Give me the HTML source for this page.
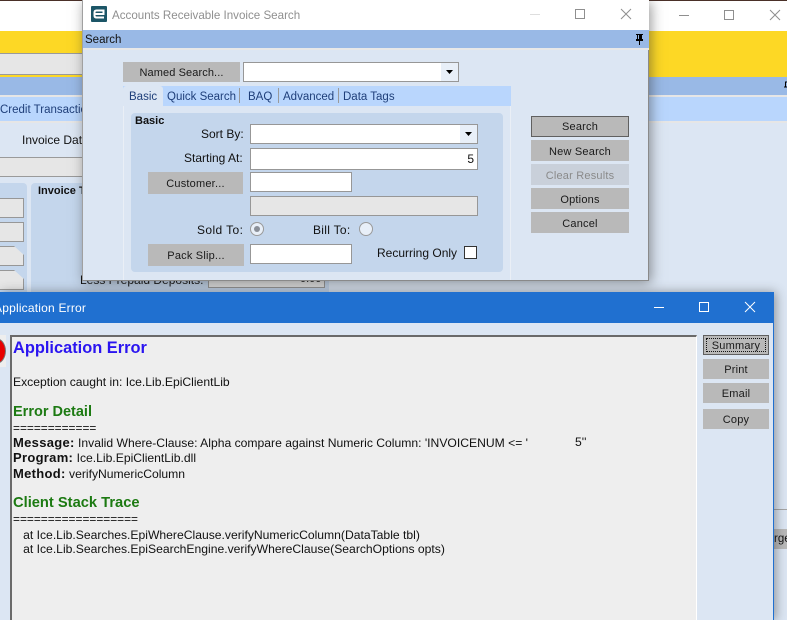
<!DOCTYPE html>
<html>
<head>
<meta charset="utf-8">
<style>
html,body{margin:0;padding:0;width:787px;height:620px;overflow:hidden;background:#dce6f3;}
body{position:relative;font-family:"Liberation Sans",sans-serif;font-size:12px;color:#111;}
.a{position:absolute;box-sizing:border-box;white-space:pre;}
.btn{position:absolute;box-sizing:border-box;background:#b9b9b9;text-align:center;font-size:11px;letter-spacing:.2px;color:#1a1a1a;padding-top:1px;}
.r{padding-top:2px;}
.in{position:absolute;box-sizing:border-box;background:#fff;border:1px solid #979797;}
.lab{position:absolute;font-size:12px;white-space:pre;color:#111;}
.tab{position:absolute;top:87px;height:20px;line-height:20px;font-size:11.5px;color:#1f3f7a;white-space:pre;}
.sep{position:absolute;top:88px;width:1px;height:15px;background:#9a9a9a;}
.err{position:absolute;left:13px;white-space:pre;font-size:12.15px;color:#111;}
.err b{font-size:13px;letter-spacing:.3px;}
.h2{font-weight:bold;color:#1c7a12;}
</style>
</head>
<body>
<!-- background app -->
<div class="a" style="left:0;top:0;width:787px;height:31px;background:#fff;"></div>
<div class="a" style="left:0;top:0;width:787px;height:1px;background:#4a3028;"></div>
<div class="a" style="left:0;top:31px;width:787px;height:46px;background:#fdd825;"></div>
<div class="a" style="left:0;top:53px;width:90px;height:22px;background:#e6e6e6;border-top:1px solid #9a9a9a;border-bottom:1px solid #9a9a9a;"></div>
<div class="a" style="left:0;top:77px;width:787px;height:18px;background:#99b9e6;"></div>
<div class="a" style="left:0;top:95px;width:787px;height:2px;background:#e6e6e6;"></div>
<div class="a" style="left:0;top:97px;width:787px;height:24px;background:#b9d6fd;"></div>
<div class="a" style="left:0;top:121px;width:787px;height:2px;background:#e6e6e6;"></div>
<div class="a" style="left:0;top:104px;font-size:11.5px;color:#1f3f7a;">Credit Transactions</div>
<div class="a" style="left:22px;top:133px;font-size:12px;">Invoice Date:</div>
<div class="a" style="left:0;top:157px;width:90px;height:20px;background:#e6e6e6;border-top:1px solid #9a9a9a;border-bottom:1px solid #9a9a9a;"></div>
<div class="a" style="left:0;top:183px;width:27px;height:110px;background:#c4d6ec;border-radius:0 4px 0 0;"></div>
<div class="a" style="left:31px;top:183px;width:298px;height:110px;background:#c4d6ec;border-radius:4px 0 0 0;"></div>
<div class="a" style="left:38px;top:185px;font-size:11px;font-weight:bold;">Invoice Totals</div>
<div class="a" style="left:0;top:198px;width:24px;height:20px;background:#e6e6e6;border:1px solid #979797;border-left:0;"></div>
<div class="a" style="left:0;top:222px;width:24px;height:20px;background:#e6e6e6;border:1px solid #979797;border-left:0;"></div>
<div class="a" style="left:0;top:246px;width:24px;height:20px;background:#e6e6e6;border:1px solid #979797;border-left:0;clip-path:polygon(0 0,14px 0,100% 9px,100% 100%,0 100%);"></div>
<div class="a" style="left:0;top:270px;width:24px;height:20px;background:#e6e6e6;border:1px solid #979797;border-left:0;clip-path:polygon(0 0,14px 0,100% 9px,100% 100%,0 100%);"></div>
<div class="a" style="left:80px;top:273px;font-size:12px;">Less Prepaid Deposits:</div>
<div class="a" style="left:208px;top:275px;width:117px;height:13px;background:#e6e6e6;border:1px solid #979797;"></div>
<div class="a" style="left:300px;top:273px;font-size:11px;">0.00</div>
<!-- background window controls -->
<svg class="a" style="left:670px;top:0;" width="117" height="31" fill="none" stroke="#8f8f8f" stroke-width="1">
<path d="M9 15.5H19"/><rect x="54.5" y="10.5" width="9" height="9"/><path d="M100 10L110 20M110 10L100 20"/>
</svg>
<svg class="a" style="left:784px;top:81px;" width="3" height="9"><path d="M1 1H3M1.500 1V6M0 6H3" stroke="#000" fill="none"/></svg>
<div class="a" style="left:774px;top:509px;width:13px;height:1px;background:#a5a5a5;"></div>
<div class="a" style="left:774px;top:529px;width:13px;height:20px;background:#b9b9b9;overflow:hidden;font-size:11.5px;line-height:21px;">rge</div>

<!-- search dialog -->
<div class="a" style="left:82px;top:0;width:567px;height:281px;background:#dce6f3;box-shadow:2px 2px 12px rgba(50,50,50,.5);border-right:1px solid #8a8a8a;border-bottom:1px solid #8a8a8a;border-left:1px solid #a0a0a0;"></div>
<div class="a" style="left:83px;top:0;width:566px;height:30px;background:#fff;"></div>
<div class="a" style="left:91px;top:6px;width:16px;height:16px;background:#1c5667;border-radius:1px;"></div>
<svg class="a" style="left:91px;top:6px;" width="16" height="16" fill="none" stroke="#fff" stroke-width="2"><path d="M4 8H12.500V4.500H5.500Q3.500 4.500 3.500 6.500V9.500Q3.500 11.500 5.500 11.500H13"/></svg>
<div class="a" style="left:112px;top:9px;font-size:11.6px;color:#8f8f8f;">Accounts Receivable Invoice Search</div>
<svg class="a" style="left:520px;top:0;" width="129" height="30" fill="none" stroke-width="1">
<path d="M10 14.500H20" stroke="#dedede"/><rect x="55.500" y="9.500" width="9" height="9" stroke="#8f8f8f"/><path d="M101 9L111 19M111 9L101 19" stroke="#8f8f8f"/>
</svg>
<div class="a" style="left:83px;top:30px;width:566px;height:18px;background:#99b9e6;"></div>
<div class="a" style="left:83px;top:48px;width:566px;height:2px;background:#e8e8e8;"></div>
<div class="a" style="left:85px;top:34px;font-size:11.5px;">Search</div>
<svg class="a" style="left:634px;top:33px;" width="11" height="12"><path d="M2 1H9V2H8V6H9V8H6V12H5V8H2V6H3V2H2Z M4 2V6H5V2Z" fill="#000" fill-rule="evenodd"/></svg>

<div class="btn" style="left:123px;top:62px;width:117px;height:20px;line-height:20px;letter-spacing:.1px;">Named Search...</div>
<div class="in" style="left:243px;top:62px;width:216px;height:20px;"></div>
<div class="a" style="left:441px;top:63px;width:17px;height:18px;background:#e8eff8;"></div>
<svg class="a" style="left:446px;top:70px;" width="8" height="5"><path d="M0 0H7L3.500 4Z" fill="#000"/></svg>

<div class="a" style="left:123px;top:86px;width:388px;height:20px;background:#b9d6fd;"></div>
<div class="a" style="left:123px;top:86px;width:40px;height:20px;background:#dce6f3;border-radius:3px 3px 0 0;"></div>
<div class="tab" style="left:129px;">Basic</div>
<div class="tab" style="left:167px;">Quick Search</div>
<div class="sep" style="left:239px;"></div>
<div class="tab" style="left:248px;">BAQ</div>
<div class="sep" style="left:278px;"></div>
<div class="tab" style="left:283px;">Advanced</div>
<div class="sep" style="left:338px;"></div>
<div class="tab" style="left:343px;">Data Tags</div>

<div class="a" style="left:510px;top:106px;width:1px;height:174px;background:#eaeff6;"></div>
<div class="a" style="left:123px;top:106px;width:1px;height:174px;background:#eaeff6;"></div>
<div class="a" style="left:131px;top:113px;width:372px;height:159px;background:#c4d6ec;border-radius:4px;"></div>
<div class="a" style="left:135px;top:115px;font-size:11px;font-weight:bold;">Basic</div>

<div class="lab" style="left:201px;top:127px;">Sort By:</div>
<div class="in" style="left:250px;top:124px;width:228px;height:20px;"></div>
<div class="a" style="left:460px;top:125px;width:17px;height:18px;background:#e8eff8;"></div>
<svg class="a" style="left:465px;top:132px;" width="8" height="5"><path d="M0 0H7L3.500 4Z" fill="#000"/></svg>

<div class="lab" style="left:184px;top:151px;">Starting At:</div>
<div class="in" style="left:250px;top:148px;width:228px;height:22px;text-align:right;padding-right:3px;line-height:20px;font-size:12px;">5</div>

<div class="btn" style="left:148px;top:172px;width:95px;height:22px;line-height:22px;">Customer...</div>
<div class="in" style="left:250px;top:172px;width:102px;height:20px;"></div>
<div class="in" style="left:250px;top:196px;width:228px;height:20px;background:#e6e6e6;"></div>

<div class="lab" style="left:197px;top:223px;letter-spacing:.4px;">Sold To:</div>
<div class="a" style="left:250px;top:222px;width:14px;height:14px;border-radius:50%;background:#e8eff8;border:1px solid #9a9a9a;"></div>
<div class="a" style="left:254px;top:226px;width:6px;height:6px;border-radius:50%;background:#8a8f98;"></div>
<div class="lab" style="left:313px;top:223px;letter-spacing:.3px;">Bill To:</div>
<div class="a" style="left:359px;top:222px;width:14px;height:14px;border-radius:50%;background:#e8eff8;border:1px solid #9a9a9a;"></div>

<div class="btn" style="left:148px;top:244px;width:96px;height:22px;line-height:22px;">Pack Slip...</div>
<div class="in" style="left:250px;top:244px;width:102px;height:20px;"></div>
<div class="lab" style="left:377px;top:246px;">Recurring Only</div>
<div class="a" style="left:464px;top:246px;width:13px;height:13px;background:#fff;border:1px solid #333;"></div>

<div class="btn r" style="left:531px;top:116px;width:98px;height:21px;line-height:19px;border:1px solid #606060;padding-top:1px;">Search</div>
<div class="btn r" style="left:531px;top:140px;width:98px;height:21px;line-height:21px;">New Search</div>
<div class="btn r" style="left:531px;top:164px;width:98px;height:21px;line-height:21px;background:#c9d0da;color:#8a8a8a;">Clear Results</div>
<div class="btn r" style="left:531px;top:188px;width:98px;height:21px;line-height:21px;">Options</div>
<div class="btn r" style="left:531px;top:212px;width:98px;height:21px;line-height:21px;">Cancel</div>

<!-- error window -->
<div class="a" style="left:0;top:292px;width:774px;height:328px;background:#dce6f3;border-right:1px solid #2070d0;box-shadow:2px 0 10px rgba(50,50,50,.45);"></div>
<div class="a" style="left:0;top:292px;width:774px;height:31px;background:#2070d0;"></div>
<div class="a" style="left:-6px;top:301px;font-size:12px;letter-spacing:.2px;color:#fff;overflow:hidden;">Application Error</div>
<svg class="a" style="left:650px;top:292px;" width="124" height="31" fill="none" stroke="#fff" stroke-width="1">
<path d="M4 15.500H14"/><rect x="49.500" y="10.500" width="9" height="9"/><path d="M95 10L105 20M105 10L95 20"/>
</svg>

<div class="a" style="left:0;top:335px;width:6px;height:32px;background:#eee;"></div>
<div class="a" style="left:-14px;top:338px;width:20px;height:26px;border-radius:50%;background:#e80000;border:1.500px solid #777;"></div>

<div class="a" style="left:10px;top:335px;width:687px;height:285px;background:#eeeeee;border-top:2px solid #6a6a6a;border-left:2px solid #6a6a6a;border-right:1px solid #fff;"></div>
<div class="err" style="top:339px;font-size:16.4px;font-weight:bold;color:#2a14f0;">Application Error</div>
<div class="err" style="top:375px;">Exception caught in: Ice.Lib.EpiClientLib</div>
<div class="err h2" style="top:404px;font-size:14.5px;">Error Detail</div>
<div class="err" style="top:421px;font-size:11.9px;">============</div>
<div class="err" style="top:435px;"><b>Message:</b> Invalid Where-Clause: Alpha compare against Numeric Column: 'INVOICENUM &lt;= '</div>
<div class="err" style="left:575px;top:435px;">5''</div>
<div class="err" style="top:450px;"><b>Program:</b> Ice.Lib.EpiClientLib.dll</div>
<div class="err" style="top:466px;"><b>Method:</b> verifyNumericColumn</div>
<div class="err h2" style="top:495px;font-size:14.7px;">Client Stack Trace</div>
<div class="err" style="top:512px;font-size:11.9px;">==================</div>
<div class="err" style="top:528px;">   at Ice.Lib.Searches.EpiWhereClause.verifyNumericColumn(DataTable tbl)</div>
<div class="err" style="top:542px;">   at Ice.Lib.Searches.EpiSearchEngine.verifyWhereClause(SearchOptions opts)</div>

<div class="btn" style="left:703px;top:335px;width:66px;height:20px;line-height:18px;border:1px solid #606060;"><span style="position:absolute;left:2px;top:2px;right:2px;bottom:2px;border:1px dotted #111;line-height:14px;">Summary</span></div>
<div class="btn" style="left:703px;top:359px;width:66px;height:20px;line-height:20px;">Print</div>
<div class="btn" style="left:703px;top:383px;width:66px;height:20px;line-height:20px;">Email</div>
<div class="btn" style="left:703px;top:409px;width:66px;height:20px;line-height:20px;">Copy</div>
</body>
</html>
